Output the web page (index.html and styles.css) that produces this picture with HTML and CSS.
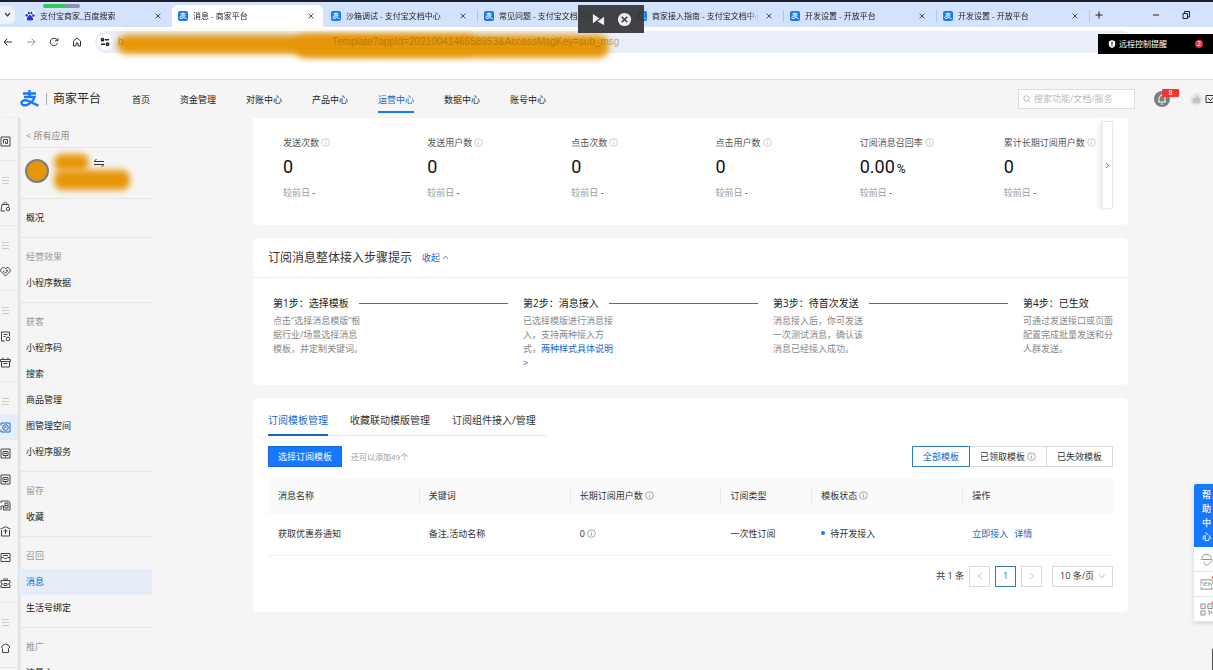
FILE: index.html
```html
<!DOCTYPE html>
<html lang="zh-CN">
  <head>
    <meta charset="UTF-8" />
    <meta name="viewport" content="width=device-width, initial-scale=1.0" />
    <title>消息 - 商家平台</title>
    <link rel="stylesheet" href="styles.css">
  </head>
  <body>
    <svg class="sprite" aria-hidden="true">
      <symbol id="alipay" viewBox="0 0 20 20">
        <path d="M3.500 4.500H16.500M10 1V8M4.500 8H15C14 11.500 11 14.500 7.500 15.800C4 17 1.600 15.500 2 13.500C2.500 11 6 10.800 9 12C12.500 13.300 15.500 15.500 19 16.500" fill="none" stroke="currentColor" stroke-width="2.400" />
      </symbol>
      <symbol id="close" viewBox="0 0 10 10"><path d="M2 2L8 8M8 2L2 8" /></symbol>
      <symbol id="info" viewBox="0 0 10 10"><circle cx="5" cy="5" r="4.300" /><path d="M5 4.300V7.500M5 2.500V3.400" /></symbol>
      <symbol id="left" viewBox="0 0 10 10"><path d="M7 1.500L3 5L7 8.500" /></symbol>
      <symbol id="right" viewBox="0 0 10 10"><path d="M3 1.500L7 5L3 8.500" /></symbol>
      <symbol id="up" viewBox="0 0 10 10"><path d="M1.500 7L5 3L8.500 7" /></symbol>
      <symbol id="down" viewBox="0 0 10 10"><path d="M1.500 3L5 7L8.500 3" /></symbol>
      <symbol id="menu" viewBox="0 0 11 11"><path d="M2 2.500H9M2 5.500H9M2 8.500H9" /></symbol>
      <symbol id="panel" viewBox="0 0 11 11"><path d="M1 1H10V10H1ZM3.500 3.500V7.500M3.500 3.500H7.500V7.500H5.500V5.500" /></symbol>
      <symbol id="bag" viewBox="0 0 11 11"><path d="M5 10H1L2 3.500H8.500L9 5.500M3.500 3.500C3.500 .5 7 .5 7 3.500" /><circle cx="8" cy="8" r="1.700" /></symbol>
      <symbol id="heart" viewBox="0 0 11 11"><path d="M5.500 10L1 5.500C-.3 3 3 0 5.500 2.500C8 0 11.300 3 10 5.500ZM3 5L5.500 7L8 4.500L5.500 4" /></symbol>
      <symbol id="doc" viewBox="0 0 11 11"><path d="M5 10H1.500V1H9.500V5M3.500 3.500H7.500M3.500 5.500H5.500" /><circle cx="8" cy="8" r="1.800" /></symbol>
      <symbol id="gift" viewBox="0 0 11 11"><path d="M1.500 4.500H9.500V10H1.500ZM.5 2.500H10.500V4.500H.5ZM3 .5V2.500M8 .5V2.500M3.500 6.500H7.500" /></symbol>
      <symbol id="app" viewBox="0 0 11 11"><path d="M1 3.500V1H10V10H1V7.500" /><circle cx="5.500" cy="5.500" r="2.800" /><path d="M4 6.500C5 3.500 6.500 4 6 6" /></symbol>
      <symbol id="note" viewBox="0 0 11 11"><path d="M1 1H10V10H1ZM3 3.500H8V7.500H3ZM4 5.500H7M5.500 7.500V9" /></symbol>
      <symbol id="chart" viewBox="0 0 11 11"><path d="M1 10V6H3.500V10M1 3V1H8.500L10 3V10H3.500M5 3V8H8V3ZM5 5.500H8" /></symbol>
      <symbol id="box" viewBox="0 0 11 11"><path d="M1.500 4V10H9.500V4M.5 3L5.500 .8L10.500 3M3.500 5H7.500M5.500 3V8" /></symbol>
      <symbol id="list" viewBox="0 0 11 11"><path d="M1 1.500H10V9.500H1ZM1 5.500H3.500L4.500 6.500H6.500L7.500 5.500H10M3 3.500H8" /></symbol>
      <symbol id="ticket" viewBox="0 0 11 11"><path d="M1 2.500H10V5L8.500 6L10 7V9.500H1V7L2.500 6L1 5ZM3 1H8M4 5.500H7V7.500H4Z" /></symbol>
      <symbol id="home" viewBox="0 0 11 11"><path d="M1.500 4L3 2L5.500 1L8 2L10 4L8.500 5.500V9.500H2.500V5.500Z" /></symbol>
    </svg>

    <header class="browser">
      <div class="tabs">
        <button class="tabs__menu" aria-label="搜索标签页"><svg class="icon icon--bold"><use href="#down" /></svg></button>
        <div class="tab">
          <svg class="tab__logo tab__logo--paw" viewBox="0 0 10 10"><ellipse cx="1.700" cy="4.200" rx="1.200" ry="1.500" /><ellipse cx="3.800" cy="1.900" rx="1.100" ry="1.500" /><ellipse cx="6.400" cy="1.900" rx="1.100" ry="1.500" /><ellipse cx="8.400" cy="4.400" rx="1.200" ry="1.500" /><path d="M5 4C3.500 4 3 6 1.900 7C1 8.500 2 9.800 3.500 9.600H6.500C8.300 9.800 9 8.200 8 7C6.800 6 6.500 4 5 4Z" /></svg>
          <span class="tab__title">支付宝商家_百度搜索</span>
          <button class="tab__close" aria-label="关闭"><svg class="icon"><use href="#close" /></svg></button>
        </div>
        <div class="tab tab--active">
          <svg class="tab__logo"><use href="#alipay" /></svg>
          <span class="tab__title">消息 - 商家平台</span>
          <button class="tab__close" aria-label="关闭"><svg class="icon"><use href="#close" /></svg></button>
        </div>
        <div class="tab tab--line">
          <svg class="tab__logo"><use href="#alipay" /></svg>
          <span class="tab__title">沙箱调试 - 支付宝文档中心</span>
          <button class="tab__close" aria-label="关闭"><svg class="icon"><use href="#close" /></svg></button>
        </div>
        <div class="tab tab--line">
          <svg class="tab__logo"><use href="#alipay" /></svg>
          <span class="tab__title">常见问题 - 支付宝文档中心</span>
          <button class="tab__close" aria-label="关闭"><svg class="icon"><use href="#close" /></svg></button>
        </div>
        <div class="tab tab--line">
          <svg class="tab__logo"><use href="#alipay" /></svg>
          <span class="tab__title">商家接入指南 - 支付宝文档中心</span>
          <button class="tab__close" aria-label="关闭"><svg class="icon"><use href="#close" /></svg></button>
        </div>
        <div class="tab tab--line">
          <svg class="tab__logo"><use href="#alipay" /></svg>
          <span class="tab__title">开发设置 - 开放平台</span>
          <button class="tab__close" aria-label="关闭"><svg class="icon"><use href="#close" /></svg></button>
        </div>
        <div class="tab tab--line">
          <svg class="tab__logo"><use href="#alipay" /></svg>
          <span class="tab__title">开发设置 - 开放平台</span>
          <button class="tab__close" aria-label="关闭"><svg class="icon"><use href="#close" /></svg></button>
        </div>
        <button class="tabs__add" aria-label="新标签页"><svg class="icon" viewBox="0 0 10 10"><path d="M5 1.500V8.500M1.500 5H8.500" /></svg></button>
        <div class="window-buttons">
          <button aria-label="最小化"><svg class="icon" viewBox="0 0 10 10"><path d="M2 5H8" /></svg></button>
          <button aria-label="还原"><svg class="icon" viewBox="0 0 10 10"><path d="M2 3.500H6.500V8.500H2ZM3.500 3.500V1.500H8.500V7H6.500" /></svg></button>
          <button aria-label="关闭窗口"><svg class="icon"><use href="#close" /></svg></button>
        </div>
      </div>
      <div class="toolbar">
        <button aria-label="后退"><svg class="icon" viewBox="0 0 10 10"><path d="M9 5H1.500M4.500 1.500L1 5L4.500 8.500" /></svg></button>
        <button class="toolbar__off" aria-label="前进"><svg class="icon" viewBox="0 0 10 10"><path d="M1 5H8.500M5.500 1.500L9 5L5.500 8.500" /></svg></button>
        <button aria-label="刷新"><svg class="icon" viewBox="0 0 10 10"><path d="M8.500 6A3.700 3.700 0 1 1 7.800 2.600L8.800 3.700M8.900 1V3.800H6" /></svg></button>
        <button aria-label="主页"><svg class="icon" viewBox="0 0 10 10"><path d="M1.500 4L5 1L8.500 4V9H6V6H4V9H1.500Z" /></svg></button>
        <div class="address">
          <span class="smudge smudge--left"></span>
          <span class="smudge smudge--right"></span>
          <span class="address__site"><svg class="icon icon--bold" viewBox="0 0 10 10"><circle cx="2.500" cy="2.800" r="1.200" /><path d="M5 2.800H9M1 7.200H5" /><circle cx="7.500" cy="7.200" r="1.200" /></svg></span>
          <span class="address__host">b</span>
          <input class="address__input" type="text" aria-label="地址" value="Template?appId=2021004146658953&amp;AccessMsgKey=sub_msg" />
        </div>
      </div>
      <div class="progress"></div>
      <div class="caster">
        <svg class="caster__icon" viewBox="0 0 16 16"><path d="M2 2L9 7L2 12ZM14 5V14L7 10Z" /></svg>
        <svg class="caster__icon" viewBox="0 0 16 16"><circle cx="8" cy="8" r="7" /><path d="M5 5L11 11M11 5L5 11" stroke="#333" stroke-width="1.500" /></svg>
      </div>
      <div class="remote">
        <svg class="remote__icon" viewBox="0 0 10 10"><path d="M5 0L9 2V6C9 8 7 9.500 5 10C3 9.500 1 8 1 6V2Z" fill="#fff" /><path d="M5 2V6M5 7V8" stroke="#000" stroke-width="1.300" /></svg>
        <span>远程控制提醒</span>
        <span class="remote__count">2</span>
      </div>
    </header>

    <header class="header">
      <a class="brand" href="#">
        <svg class="brand__logo"><use href="#alipay" /></svg>
        <span class="brand__name">商家平台</span>
      </a>
      <nav class="nav">
        <a class="nav__link" href="#">首页</a>
        <a class="nav__link" href="#">资金管理</a>
        <a class="nav__link" href="#">对账中心</a>
        <a class="nav__link" href="#">产品中心</a>
        <a class="nav__link nav__link--active" href="#">运营中心</a>
        <a class="nav__link" href="#">数据中心</a>
        <a class="nav__link" href="#">账号中心</a>
      </nav>
      <label class="search">
        <svg class="icon" viewBox="0 0 10 10"><circle cx="4.300" cy="4.300" r="3.300" /><path d="M6.800 6.800L9.300 9.300" /></svg>
        <input class="search__input" type="text" aria-label="搜索" placeholder="搜索功能/文档/服务" />
      </label>
      <button class="bell" aria-label="通知">
        <svg class="bell__icon" viewBox="0 0 16 16"><circle cx="8" cy="8" r="8" fill="#7d7d7d" /><path d="M4 11H12M5 11V7.500C5 3.500 11 3.500 11 7.500V11M8 4V3M7 13H9" fill="none" stroke="#fff" /></svg>
        <span class="bell__count">8</span>
      </button>
      <div class="user">
        <svg class="user__avatar" viewBox="0 0 14 14"><circle cx="7" cy="7" r="7" fill="#e6e6e6" /><path d="M3 11V6L6 5L8 2L9 5H11V11Z" fill="#c4c4c4" /></svg>
        <svg class="icon" viewBox="0 0 10 10"><path d="M1 1.500H10M1 1.500V8.500H10M3 4L5.500 6.500L9 2" /></svg>
      </div>
    </header>

    <div class="layout">
      <nav class="rail" aria-label="产品">
        <div class="rail__group">
          <a class="rail__item" href="#"><svg><use href="#panel" /></svg></a>
        </div>
        <div class="rail__group">
          <span class="rail__item rail__item--muted"><svg><use href="#menu" /></svg></span>
          <a class="rail__item" href="#"><svg><use href="#bag" /></svg></a>
        </div>
        <div class="rail__group">
          <span class="rail__item rail__item--muted"><svg><use href="#menu" /></svg></span>
          <a class="rail__item" href="#"><svg><use href="#heart" /></svg></a>
        </div>
        <div class="rail__group">
          <span class="rail__item rail__item--muted"><svg><use href="#menu" /></svg></span>
          <a class="rail__item" href="#"><svg><use href="#doc" /></svg></a>
          <a class="rail__item" href="#"><svg><use href="#gift" /></svg></a>
        </div>
        <div class="rail__group">
          <span class="rail__item rail__item--muted"><svg><use href="#menu" /></svg></span>
          <a class="rail__item rail__item--active" href="#"><svg><use href="#app" /></svg></a>
          <a class="rail__item" href="#"><svg><use href="#note" /></svg></a>
          <a class="rail__item" href="#"><svg><use href="#note" /></svg></a>
          <a class="rail__item" href="#"><svg><use href="#chart" /></svg></a>
          <a class="rail__item" href="#"><svg><use href="#box" /></svg></a>
          <a class="rail__item" href="#"><svg><use href="#list" /></svg></a>
          <a class="rail__item" href="#"><svg><use href="#ticket" /></svg></a>
        </div>
        <div class="rail__group">
          <span class="rail__item rail__item--muted"><svg><use href="#menu" /></svg></span>
          <a class="rail__item" href="#"><svg><use href="#home" /></svg></a>
        </div>
      </nav>

      <aside class="sidebar">
        <a class="sidebar__back" href="#">&lt; 所有应用</a>
        <div class="app">
          <span class="app__avatar"></span>
          <span class="app__name"></span>
          <button class="app__switch" aria-label="切换应用"><svg class="icon" viewBox="0 0 10 10"><path d="M0 3.500H10M0 3.500L2.500 1M10 6.500H0M10 6.500L7.500 9" /></svg></button>
          <span class="app__id"></span>
        </div>
        <div class="menu">
          <a class="menu__item" href="#">概况</a>
        </div>
        <div class="menu">
          <span class="menu__title">经营效果</span>
          <a class="menu__item" href="#">小程序数据</a>
        </div>
        <div class="menu">
          <span class="menu__title">获客</span>
          <a class="menu__item" href="#">小程序码</a>
          <a class="menu__item" href="#">搜索</a>
          <a class="menu__item" href="#">商品管理</a>
          <a class="menu__item" href="#">图管理空间</a>
          <a class="menu__item" href="#">小程序服务</a>
        </div>
        <div class="menu">
          <span class="menu__title">留存</span>
          <a class="menu__item" href="#">收藏</a>
        </div>
        <div class="menu">
          <span class="menu__title">召回</span>
          <a class="menu__item menu__item--active" href="#">消息</a>
          <a class="menu__item" href="#">生活号绑定</a>
        </div>
        <div class="menu">
          <span class="menu__title">推广</span>
          <a class="menu__item" href="#">流量主</a>
        </div>
      </aside>

      <main class="main">
        <section class="card card--stats">
          <div class="stats">
            <div class="stat">
              <div class="stat__label">发送次数<svg class="info"><use href="#info" /></svg></div>
              <div class="stat__value">0</div>
              <div class="stat__diff">较前日 <b>-</b></div>
            </div>
            <div class="stat">
              <div class="stat__label">发送用户数<svg class="info"><use href="#info" /></svg></div>
              <div class="stat__value">0</div>
              <div class="stat__diff">较前日 <b>-</b></div>
            </div>
            <div class="stat">
              <div class="stat__label">点击次数<svg class="info"><use href="#info" /></svg></div>
              <div class="stat__value">0</div>
              <div class="stat__diff">较前日 <b>-</b></div>
            </div>
            <div class="stat">
              <div class="stat__label">点击用户数<svg class="info"><use href="#info" /></svg></div>
              <div class="stat__value">0</div>
              <div class="stat__diff">较前日 <b>-</b></div>
            </div>
            <div class="stat">
              <div class="stat__label">订阅消息召回率<svg class="info"><use href="#info" /></svg></div>
              <div class="stat__value">0.00<small>%</small></div>
              <div class="stat__diff">较前日 <b>-</b></div>
            </div>
            <div class="stat">
              <div class="stat__label">累计长期订阅用户数<svg class="info"><use href="#info" /></svg></div>
              <div class="stat__value">0</div>
              <div class="stat__diff">较前日 <b>-</b></div>
            </div>
          </div>
          <button class="stats__next" aria-label="下一页"><svg><use href="#right" /></svg></button>
        </section>

        <section class="card">
          <div class="card__head">
            <h2 class="card__title">订阅消息整体接入步骤提示</h2>
            <button class="card__toggle">收起<svg><use href="#up" /></svg></button>
          </div>
          <div class="steps">
            <div class="step">
              <h3 class="step__title">第1步：选择模板</h3>
              <p class="step__text">点击“选择消息模版”根据行业/场景选择消息模板，并定制关键词。</p>
            </div>
            <div class="step">
              <h3 class="step__title">第2步：消息接入</h3>
              <p class="step__text">已选择模版进行消息接入，支持两种接入方式，<a href="#">两种样式具体说明 &gt;</a></p>
            </div>
            <div class="step">
              <h3 class="step__title">第3步：待首次发送</h3>
              <p class="step__text">消息接入后，你可发送一次测试消息，确认该消息已经接入成功。</p>
            </div>
            <div class="step">
              <h3 class="step__title">第4步：已生效</h3>
              <p class="step__text">可通过发送接口或页面配置完成批量发送和分人群发送。</p>
            </div>
          </div>
        </section>

        <section class="card card--templates">
          <div class="subtabs">
            <button class="subtabs__item subtabs__item--active">订阅模板管理</button>
            <button class="subtabs__item">收藏联动模版管理</button>
            <button class="subtabs__item">订阅组件接入/管理</button>
          </div>
          <div class="actions">
            <button class="button">选择订阅模板</button>
            <span class="actions__hint">还可以添加49个</span>
            <div class="filter">
              <button class="filter__item filter__item--active">全部模板</button>
              <button class="filter__item">已领取模板<svg class="info"><use href="#info" /></svg></button>
              <button class="filter__item">已失效模板</button>
            </div>
          </div>
          <table class="table">
            <colgroup>
              <col span="3" class="table__wide" />
              <col />
              <col span="2" class="table__wide" />
            </colgroup>
            <thead>
              <tr>
                <th>消息名称</th>
                <th>关键词</th>
                <th>长期订阅用户数<svg class="info"><use href="#info" /></svg></th>
                <th>订阅类型</th>
                <th>模板状态<svg class="info"><use href="#info" /></svg></th>
                <th>操作</th>
              </tr>
            </thead>
            <tbody>
              <tr>
                <td>获取优惠券通知</td>
                <td>备注,活动名称</td>
                <td>0<svg class="info"><use href="#info" /></svg></td>
                <td>一次性订阅</td>
                <td><span class="status">待开发接入</span></td>
                <td><a href="#">立即接入</a><a href="#">详情</a></td>
              </tr>
            </tbody>
          </table>
          <div class="pager">
            <span class="pager__total">共 1 条</span>
            <button class="pager__item" aria-label="上一页" disabled><svg><use href="#left" /></svg></button>
            <button class="pager__item pager__item--active">1</button>
            <button class="pager__item" aria-label="下一页" disabled><svg><use href="#right" /></svg></button>
            <div class="pager__size">
              <select aria-label="每页条数">
                <option>10 条/页</option>
                <option>20 条/页</option>
              </select>
              <svg><use href="#down" /></svg>
            </div>
          </div>
        </section>
      </main>
    </div>

    <div class="help">
      <button class="help__main">帮助中心</button>
      <button class="help__item" aria-label="客服"><svg viewBox="0 0 14 14"><path d="M1 7H3M11 7H13M2 6C2 0 12 0 12 6M3 7H11M4 10C5 14 9 14 11 10L13 8" /></svg></button>
      <button class="help__item help__item--dot" aria-label="新功能"><svg viewBox="0 0 14 14"><path d="M1 4V2H13V4M1 10V12H13V10" /><text x="0" y="9">new</text></svg></button>
      <button class="help__item help__item--dot" aria-label="二维码"><svg viewBox="0 0 14 14"><path d="M1 1H5.500V6H1ZM8.500 1H13V6H8.500ZM1 8.500H5.500V13H1ZM8.500 8.500H10V13M12 8.500V11H13.500M3 3V4M10.500 3V4M3 10.500V11.500" /></svg></button>
    </div>
    <div class="edge"></div>
  </body>
</html>
```
FILE: styles.css
```css
* {
  box-sizing: border-box;
}

body {
  margin: 0;
  height: 100vh;
  display: flex;
  flex-direction: column;
  overflow: hidden;
  background: #f5f5f5;
  color: #333;
  font-family: 'Open Sans', 'Noto Sans CJK SC', sans-serif;
  font-size: 9px;
  line-height: 14px;
}

button,
input,
select {
  margin: 0;
  padding: 0;
  border: 0;
  background: none;
  color: inherit;
  font: inherit;
}

a {
  color: #1668c7;
  text-decoration: none;
}

h2,
h3,
p {
  margin: 0;
  font-weight: 400;
}

svg {
  display: block;
  flex-shrink: 0;
  width: 10px;
  height: 10px;
  fill: none;
  stroke: currentColor;
}

.sprite {
  position: absolute;
  width: 0;
  height: 0;
}

.icon--bold {
  stroke-width: 1.5;
}

.info {
  width: 9px;
  height: 9px;
  margin-left: 2px;
  display: inline-block;
  vertical-align: -1px;
  color: #888;
  stroke-width: 0.8;
}

/* browser */

.browser {
  position: relative;
  flex-shrink: 0;
  height: 80px;
  border-top: 2px solid #1c1e2b;
  border-bottom: 1px solid #dcdcdc;
  background: #fff;
}

.tabs {
  display: flex;
  align-items: center;
  height: 25px;
  background: #d3e3fd;
  color: #222;
  font-size: 8px;
}

.tabs__menu {
  display: flex;
  justify-content: center;
  align-items: center;
  width: 15px;
  height: 18px;
  margin-right: 4px;
  border-radius: 0 6px 6px 0;
  background: #edf3fe;
}

.tabs__menu .icon {
  width: 7px;
  height: 7px;
}

.tab {
  display: flex;
  align-items: center;
  flex: 0 1 153px;
  min-width: 0;
  height: 22px;
  padding: 0 10px 0 6px;
  align-self: flex-end;
}

.tab--active {
  flex-basis: 151px;
  margin-right: 2px;
  padding-right: 8px;
  border-radius: 6px 6px 0 0;
  background: #fff;
}

.tab--line {
  border-right: 1px solid;
  border-image: linear-gradient(transparent 25%, #a9c7f5 25%, #a9c7f5 75%, transparent 75%) 1;
}

.tab__logo {
  margin-right: 5px;
  padding: 1px;
  border-radius: 2px;
  background: #1677ff;
  color: #fff;
}

.tab__logo--paw {
  padding: 0;
  background: #fff;
  fill: #2932e1;
  stroke: none;
}

.tab__title {
  flex: 1;
  overflow: hidden;
  white-space: nowrap;
  mask-image: linear-gradient(to right, #000 90%, transparent);
}

.tab__close {
  margin-left: 6px;
}

.tab__close .icon {
  width: 8px;
  height: 8px;
}

.tabs__add {
  margin-left: 4px;
}

.window-buttons {
  display: flex;
  gap: 20px;
  margin-left: auto;
  margin-right: -8px;
}

.toolbar {
  display: flex;
  align-items: center;
  gap: 13px;
  padding: 4px 80px 0 3px;
}

.toolbar__off {
  color: #999;
}

.address {
  position: relative;
  display: flex;
  align-items: center;
  flex: 1;
  height: 22px;
  border-radius: 11px;
  background: #e9eef8;
  color: #8a5a0680;
  font-family: 'Liberation Sans', sans-serif;
  font-size: 10px;
}

.address__site {
  display: flex;
  justify-content: center;
  align-items: center;
  width: 16px;
  height: 16px;
  margin: 0 5px 0 2px;
  border-radius: 50%;
  background: #fff;
  color: #222;
}

.address__host {
  position: relative;
  width: 214px;
}

.address__input {
  position: relative;
  flex: 1;
}

.smudge {
  position: absolute;
  border-radius: 10px;
  background: #e69709;
  filter: blur(3px);
}

.smudge--left {
  left: 22px;
  top: 4px;
  width: 360px;
  height: 19px;
}

.smudge--right {
  left: 200px;
  top: 4px;
  width: 314px;
  height: 23px;
}

.progress {
  position: absolute;
  left: 43px;
  top: 2px;
  width: 37px;
  height: 4px;
  border-radius: 2px;
  background: linear-gradient(to right, #2fca5b 62%, #8b93a7 62%);
}

.caster {
  position: absolute;
  left: 578px;
  top: 3px;
  display: flex;
  justify-content: center;
  align-items: center;
  gap: 11px;
  width: 66px;
  height: 28px;
  background: #38393bf2;
}

.caster__icon {
  width: 15px;
  height: 15px;
  fill: #eee;
  stroke: none;
}

.remote {
  position: absolute;
  right: 0;
  top: 32px;
  display: flex;
  align-items: center;
  gap: 3px;
  width: 115px;
  height: 20px;
  padding: 0 10px;
  background: #000;
  color: #fff;
  font-size: 8px;
}

.remote__icon {
  width: 8px;
  height: 8px;
  stroke: none;
}

.remote__count {
  width: 8px;
  height: 8px;
  margin-left: auto;
  border-radius: 50%;
  background: #dc3150;
  font-size: 7px;
  line-height: 8px;
  text-align: center;
}

/* header */

.header {
  display: flex;
  align-items: center;
  flex-shrink: 0;
  height: 38px;
  padding-left: 19px;
}

.brand {
  display: flex;
  align-items: center;
  color: #222;
}

.brand__logo {
  width: 21px;
  height: 20px;
  color: #1677ff;
}

.brand__name {
  margin-left: 6px;
  padding-left: 6px;
  border-left: 1px solid #aaa;
  font-size: 12px;
  line-height: 12px;
}

.nav {
  display: flex;
  gap: 30px;
  margin-left: 31px;
}

.nav__link {
  padding: 7px 0 4px;
  border-bottom: 2px solid transparent;
  color: #222;
}

.nav__link--active {
  border-color: #1677ff;
  color: #1668c7;
}

.search {
  display: flex;
  align-items: center;
  gap: 3px;
  width: 117px;
  height: 20px;
  margin-left: auto;
  padding: 0 4px;
  border: 1px solid #ddd;
  background: #fff;
  color: #aaa;
}

.search .icon {
  width: 8px;
  height: 8px;
}

.search__input {
  flex: 1;
  min-width: 0;
}

.search__input::placeholder {
  color: #bbb;
}

.bell {
  position: relative;
  margin-left: 19px;
}

.bell__icon {
  width: 16px;
  height: 16px;
  stroke: none;
}

.bell__count {
  position: absolute;
  left: 8px;
  top: -2px;
  width: 17px;
  height: 8px;
  border-radius: 1px;
  background: #f5342b;
  color: #fff;
  font-size: 7px;
  line-height: 8px;
}

.user {
  display: flex;
  align-items: center;
  gap: 2px;
  margin-left: 20px;
  margin-right: -2px;
}

.user__avatar {
  width: 13px;
  height: 13px;
  stroke: none;
}

/* navigation */

.layout {
  display: flex;
  flex: 1;
  min-height: 0;
}

.rail {
  flex-shrink: 0;
  width: 19px;
  padding-top: 10px;
  overflow: hidden;
  border-right: 1px solid #dedede;
  box-shadow: 1px 0 2px #0000001a;
}

.rail__group {
  padding-bottom: 6px;
  border-bottom: 1px solid #e8e8e8;
  margin-bottom: 6px;
}

.rail__item {
  display: flex;
  align-items: center;
  height: 26px;
  color: #444;
}

.rail__item svg {
  width: 11px;
  height: 11px;
}

.rail__item--muted {
  color: #ccc;
}

.rail__item--active {
  background: #e6edf8;
  color: #1668c7;
}

.sidebar {
  flex-shrink: 0;
  width: 133px;
  overflow: hidden;
}

.sidebar__back {
  display: block;
  padding: 11px 7px 4px;
  border-bottom: 1px solid #e6e6e6;
  color: #888;
}

.app {
  display: grid;
  grid-template-columns: 24px 35px 10px;
  grid-template-rows: 17px 17px;
  column-gap: 5px;
  align-items: center;
  height: 51px;
  padding: 6px;
  border-bottom: 1px solid #e6e6e6;
}

.app__avatar {
  grid-row: span 2;
  height: 24px;
  border: 2px solid #788078;
  border-radius: 50%;
  background: radial-gradient(#e69709 60%, #b69345);
}

.app__name,
.app__id {
  height: 17px;
  border-radius: 8px;
  background: #e69709;
  filter: blur(3px);
}

.app__id {
  grid-column: 2 / 4;
  width: 76px;
  height: 20px;
}

.menu {
  padding: 6px 0;
  border-bottom: 1px solid #e6e6e6;
}

.menu__title,
.menu__item {
  display: block;
  padding: 6px 7px;
  color: #222;
}

.menu__title {
  color: #999;
}

.menu__item--active {
  background: #e6edf8;
  color: #1668c7;
}

/* cards */

.main {
  display: flex;
  flex-direction: column;
  gap: 13px;
  flex: 1;
  min-width: 0;
  padding: 0 85px 0 101px;
}

.card {
  position: relative;
  flex-shrink: 0;
  border-radius: 5px;
  background: #fff;
}

.card--stats {
  padding: 18px 0 25px 30px;
  border-radius: 0 0 5px 5px;
  overflow: hidden;
}

.stats {
  display: grid;
  grid-template-columns: repeat(6, 1fr);
  margin-right: -20px;
}

.stat__label {
  color: #555;
  white-space: nowrap;
}

.stat__label .info {
  color: #bbb;
}

.stat__value {
  height: 22px;
  margin: 6px 0 8px;
  color: #111;
  font-family: Roboto, sans-serif;
  font-size: 18px;
  line-height: 22px;
}

.stat__value small {
  margin-left: 2px;
  font-size: 12px;
}

.stat__diff {
  color: #999;
}

.stat__diff b {
  color: #222;
  font-weight: 400;
}

.stats__next {
  position: absolute;
  right: 15px;
  top: 3px;
  display: flex;
  justify-content: center;
  align-items: center;
  width: 11px;
  height: 88px;
  border: 1px solid #e8e8e8;
  background: #fff;
  box-shadow: -3px 0 4px #00000014;
}

.stats__next svg {
  width: 7px;
  height: 7px;
}

.card__head {
  display: flex;
  align-items: center;
  gap: 10px;
  height: 40px;
  padding: 0 15px;
  border-bottom: 1px solid #eee;
}

.card__title {
  font-size: 12px;
}

.card__toggle {
  display: flex;
  align-items: center;
  gap: 2px;
  color: #1668c7;
}

.card__toggle svg {
  width: 7px;
  height: 7px;
}

.steps {
  display: grid;
  grid-template-columns: 1fr 1fr 1fr 105px;
  padding: 18px 0 15px 20px;
}

.step__title {
  display: flex;
  align-items: center;
  gap: 10px;
  margin-bottom: 3px;
  padding-right: 15px;
  font-size: 10px;
  line-height: 15px;
  white-space: nowrap;
  color: #222;
}

.step:not(:last-child) .step__title::after {
  content: '';
  flex: 1;
  height: 1px;
  background: #3478ae;
}

.step__text {
  width: 92px;
  color: #888;
}

/* templates */

.card--templates {
  padding: 13px 15px 25px;
}

.subtabs {
  display: inline-flex;
  gap: 22px;
  padding-right: 10px;
  border-bottom: 1px solid #e8e8e8;
  font-size: 10px;
  vertical-align: top;
}

.subtabs__item {
  margin-bottom: -1px;
  padding: 2px 0 7px;
  border-bottom: 2px solid transparent;
  line-height: 14px;
}

.subtabs__item--active {
  border-color: #1668c7;
  color: #1668c7;
}

.actions {
  display: flex;
  align-items: center;
  margin: 10px 0 11px;
}

.button {
  height: 21px;
  padding: 0 9px;
  border: 1px solid #1668dc;
  background: #1677ff;
  color: #fff;
}

.actions__hint {
  margin-left: 9px;
  color: #999;
  font-size: 8px;
}

.filter {
  display: flex;
  margin-left: auto;
}

.filter__item {
  height: 21px;
  padding: 0 10px;
  border: 1px solid #d9d9d9;
  margin-left: -1px;
}

.filter__item--active {
  position: relative;
  border-color: #2f7fc9;
  color: #1668c7;
}

.table {
  width: 100%;
  table-layout: fixed;
  border-collapse: collapse;
}

.table__wide {
  width: 17.85%;
}

.table th,
.table td {
  padding: 0 10px;
  font-weight: 400;
  text-align: left;
}

.table th {
  height: 36px;
  background: #fafafa;
}

.table th + th {
  background: linear-gradient(#e8e8e8, #e8e8e8) 0 50% / 1px 14px no-repeat #fafafa;
}

.table td {
  height: 41px;
  border-bottom: 1px solid #f0f0f0;
}

.table td a {
  margin-right: 6px;
}

.status::before {
  content: '';
  display: inline-block;
  width: 4px;
  height: 4px;
  margin-right: 5px;
  border-radius: 50%;
  background: #1677ff;
  vertical-align: 2px;
}

.pager {
  display: flex;
  justify-content: flex-end;
  align-items: center;
  gap: 5px;
  margin-top: 10px;
}

.pager__item,
.pager__size {
  display: flex;
  justify-content: center;
  align-items: center;
  width: 21px;
  height: 21px;
  border: 1px solid #d9d9d9;
}

.pager svg {
  width: 8px;
  height: 8px;
  color: #aaa;
}

.pager__item--active {
  border-color: #2f7f9f;
  color: #1668c7;
}

.pager__size {
  position: relative;
  width: 61px;
  margin-left: 5px;
}

.pager__size select {
  width: 100%;
  padding-left: 7px;
  appearance: none;
}

.pager__size svg {
  position: absolute;
  right: 6px;
  pointer-events: none;
}

/* floating help */

.help {
  position: fixed;
  right: -6px;
  top: 484px;
  width: 25px;
  background: #fff;
  box-shadow: 0 1px 4px #00000026;
}

.help__main {
  display: block;
  width: 100%;
  padding: 4px 8px 3px;
  border-radius: 2px 0 0 0;
  background: #1677ff;
  color: #fff;
  font-weight: 500;
}

.help__item {
  position: relative;
  display: flex;
  justify-content: center;
  align-items: center;
  width: 100%;
  height: 25px;
  border-bottom: 1px solid #e8e8e8;
  color: #888;
}

.help__item svg {
  width: 13px;
  height: 13px;
}

.help__item text {
  fill: #888;
  stroke: none;
  font-size: 7px;
}

.help__item--dot::after {
  content: '';
  position: absolute;
  right: 4px;
  top: 4px;
  width: 3px;
  height: 3px;
  border-radius: 50%;
  background: #f5342b;
}

.edge {
  position: fixed;
  right: 0;
  bottom: 0;
  width: 1px;
  height: 21px;
  background: #555;
}
```
